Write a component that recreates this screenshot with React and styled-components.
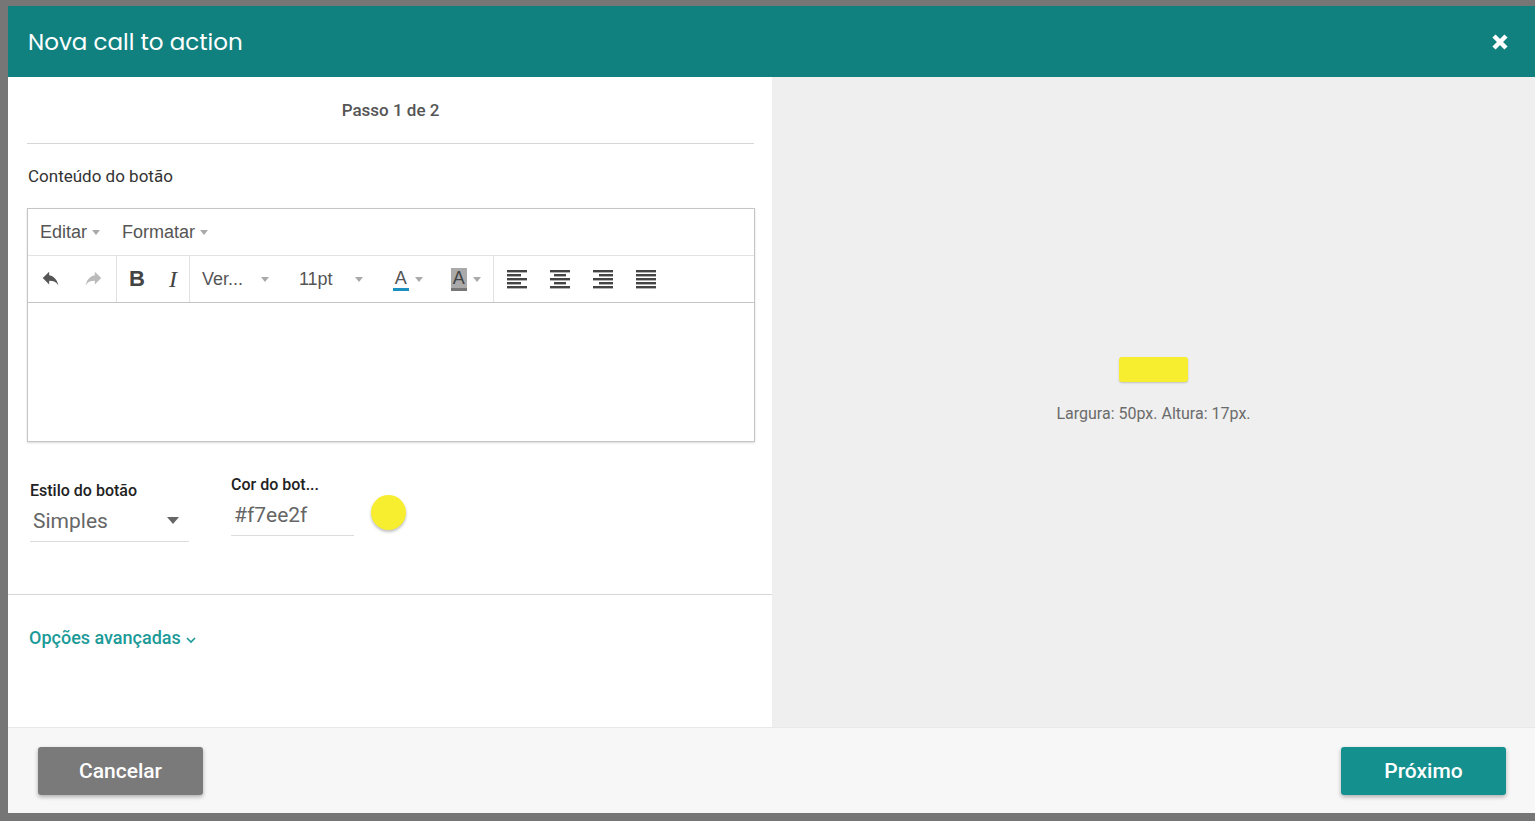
import React from "react";
import styled, { createGlobalStyle } from "styled-components";

const G = createGlobalStyle`
  html,body{margin:0;padding:0;background:#767676;overflow:hidden;}
  *{box-sizing:border-box;}
  body{font-family:Roboto,"Liberation Sans",sans-serif;}
`;
const Modal = styled.div`
  margin:6px 0 0 8px;width:1527px;height:807px;background:#fff;display:flex;flex-direction:column;
`;
const Header = styled.div`
  height:71px;background:#10817f;display:flex;align-items:center;justify-content:space-between;padding:0 26px 0 20px;
  color:#fff;font-family:Poppins,"Open Sans",sans-serif;font-size:23px;
`;
const Body = styled.div`flex:1;display:flex;`;
const Left = styled.div`width:764px;display:flex;flex-direction:column;`;
const Top = styled.div`padding:0 18px 0 19px;`;
const Step = styled.div`
  height:67px;display:flex;align-items:center;justify-content:center;font-weight:500;font-size:17px;color:#555;border-bottom:1px solid #d6d6d6;
`;
const Label = styled.div`font-size:17px;color:#333;margin:22px 0 22px 1px;`;
const Editor = styled.div`border:1px solid #c5c5c5;width:728px;box-shadow:0 1px 2px rgba(0,0,0,.15);`;
const Menu = styled.div`height:47px;display:flex;align-items:center;padding-left:12px;gap:22px;border-bottom:1px solid #e2e2e2;font-family:"Liberation Sans",Arial,sans-serif;font-size:18px;color:#555;`;
const Caret = styled.span`display:inline-block;border:4px solid transparent;border-top:5px solid #aaa;border-bottom:0;margin-left:5px;vertical-align:middle;`;
const Tools = styled.div`height:47px;display:flex;border-bottom:1px solid #c5c5c5;`;
const Group = styled.div`display:flex;align-items:center;gap:${p=>p.gap||20}px;padding:0 12px;border-right:${p=>p.last?"none":"1px solid #e2e2e2"};font-family:"Liberation Sans",Arial,sans-serif;font-size:18px;color:#555;`;
const Area = styled.div`height:138px;`;
const Fields = styled.div`display:flex;align-items:flex-start;padding:0 0 0 22px;margin-top:18px;height:135px;border-bottom:1px solid #d6d6d6;`;
const Field = styled.div`display:flex;flex-direction:column;width:${p=>p.w}px;margin-right:${p=>p.mr||0}px;`;
const FL = styled.div`font-size:16px;font-weight:500;color:#222;height:${p=>p.h}px;display:flex;align-items:flex-end;`;
const Inp = styled.div`height:42px;border-bottom:1px solid #ddd;display:flex;align-items:center;justify-content:space-between;padding:0 10px 0 3px;font-size:21px;color:#666;`;
const Dot = styled.div`width:35px;height:35px;border-radius:50%;background:#f7ee2f;box-shadow:0 2px 3px rgba(0,0,0,.25);margin-top:35px;`;
const Adv = styled.div`padding:32px 21px;color:#1a9a98;font-size:18px;font-weight:500;`;
const Right = styled.div`flex:1;background:#efefef;display:flex;flex-direction:column;align-items:center;padding-top:280px;`;
const Prev = styled.div`width:69px;height:25px;background:#f7ee2f;border-radius:3px;box-shadow:0 1px 2px rgba(0,0,0,.2);`;
const Dim = styled.div`margin-top:22px;font-size:16px;color:#6b6b6b;`;
const Footer = styled.div`height:86px;background:#f7f7f7;border-top:1px solid #e8e8e8;display:flex;align-items:center;justify-content:space-between;padding:0 29px 0 30px;`;
const Btn = styled.div`width:165px;height:48px;border-radius:3px;background:${p=>p.bg};color:#fff;font-size:21px;font-weight:500;display:flex;align-items:center;justify-content:center;box-shadow:0 2px 4px rgba(0,0,0,.3);`;

const I = ({d,c="#555"}) => <svg width="22" height="22" viewBox="0 0 24 24"><path d={d} fill={c}/></svg>;
const Lines = ({t}) => {
  const w = {l:[20,14,20,14,20],c:[20,12,20,12,20],r:[20,14,20,14,20],j:[20,20,20,20,20]}[t];
  return <svg width="22" height="20" viewBox="0 0 22 20">{w.map((ww,i)=>{
    const x = t==="l"||t==="j"?1:t==="r"?21-ww:(22-ww)/2;
    return <rect key={i} x={x} y={1+i*4} width={ww} height="2.4" fill="#444"/>;})}</svg>;
};

export default function App(){
  return <><G/><Modal>
    <Header><span>Nova call to action</span>
      <svg width="18" height="18" viewBox="0 0 18 18"><path d="M3 3L15 15M15 3L3 15" stroke="#fff" strokeWidth="4.5"/></svg>
    </Header>
    <Body>
      <Left>
        <Top>
          <Step>Passo 1 de 2</Step>
          <Label>Conteúdo do botão</Label>
          <Editor>
            <Menu><span>Editar<Caret/></span><span>Formatar<Caret/></span></Menu>
            <Tools>
              <Group gap={20}>
                <I d="M10 8V4l-7 7 7 7v-4c5 0 8 1.5 10 5-1-5-4-10-10-11z"/>
                <I c="#bbb" d="M14 8V4l7 7-7 7v-4c-5 0-8 1.5-10 5 1-5 4-10 10-11z"/>
              </Group>
              <Group gap={24}>
                <b style={{fontSize:22,color:"#444",fontFamily:"Liberation Sans"}}>B</b>
                <i style={{fontSize:24,color:"#444",fontFamily:"Liberation Serif"}}>I</i>
              </Group>
              <Group gap={20}>
                <span>Ver...<Caret style={{marginLeft:18}}/></span>
                <span style={{marginLeft:10}}>11pt<Caret style={{marginLeft:22}}/></span>
                <span style={{marginLeft:10,borderBottom:"3px solid #1b8fc0",lineHeight:"20px",padding:"0 2px"}}>A</span><Caret style={{marginLeft:-14}}/>
                <span style={{marginLeft:8,background:"#aaa",borderBottom:"3px solid #777",lineHeight:"20px",padding:"0 2px",color:"#444"}}>A</span><Caret style={{marginLeft:-14}}/>
              </Group>
              <Group gap={21} last>
                <Lines t="l"/><Lines t="c"/><Lines t="r"/><Lines t="j"/>
              </Group>
            </Tools>
            <Area/>
          </Editor>
        </Top>
        <Fields>
          <Field w={159} mr={42}><FL h={40}>Estilo do botão</FL>
            <Inp>Simples<svg width="12" height="7"><path d="M0 0h12L6 7z" fill="#666"/></svg></Inp></Field>
          <Field w={123} mr={17}><FL h={34}>Cor do bot...</FL><Inp>#f7ee2f</Inp></Field>
          <Dot/>
        </Fields>
        <Adv>Opções avançadas <svg width="12" height="8" viewBox="0 0 12 8"><path d="M2 2l4 4 4-4" stroke="#1a9a98" strokeWidth="1.6" fill="none"/></svg></Adv>
      </Left>
      <Right><Prev/><Dim>Largura: 50px. Altura: 17px.</Dim></Right>
    </Body>
    <Footer><Btn bg="#7a7a7a">Cancelar</Btn><Btn bg="#14918f">Próximo</Btn></Footer>
  </Modal></>;
}
